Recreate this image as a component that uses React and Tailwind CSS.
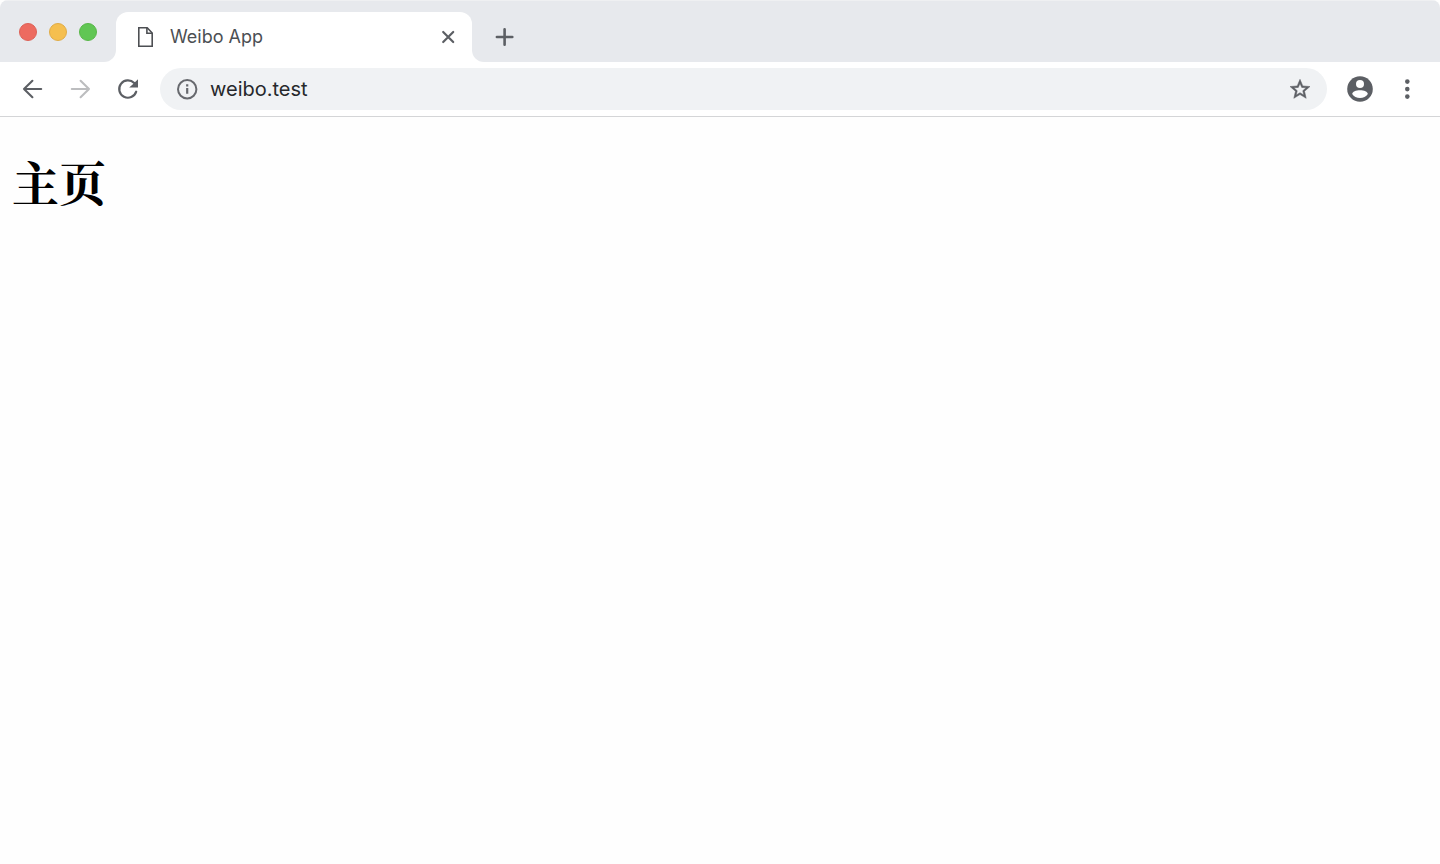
import React from "react";

function TrafficLights() {
  return (
    <div className="flex gap-3">
      <button aria-label="Close window" className="size-[18px] rounded-full border border-[#dd6157] bg-[#ed6b60]" />
      <button aria-label="Minimize window" className="size-[18px] rounded-full border border-[#e0ac46] bg-[#f5bf4f]" />
      <button aria-label="Zoom window" className="size-[18px] rounded-full border border-[#58b748] bg-[#61c654]" />
    </div>
  );
}

function TabStrip() {
  return (
    <div className="flex h-[62px] overflow-hidden rounded-t-lg bg-white">
      <div className="flex w-[116px] shrink-0 items-start rounded-br-xl border-t border-[#eff0f2] bg-[#e7e9ed] pt-[22px] pl-[19px]">
        <TrafficLights />
      </div>
      <div className="w-[356px] border-t border-[#eff0f2] bg-[#e7e9ed] pt-[11px]">
        <div className="flex h-[50px] items-center rounded-t-xl bg-white pr-4 pl-5">
          <svg width="18" height="24" viewBox="0 0 18 24" fill="none" stroke="#4d4f53" strokeWidth="1.6" aria-hidden="true">
            <path d="M2.8 2.8H11.2L16.2 8V21.2H2.8Z" />
            <path d="M10.9 3V8.3H16" />
          </svg>
          <span className="ml-4 flex-1 font-['Inter',sans-serif] text-lg text-[#4c4f53]">Weibo App</span>
          <button aria-label="Close tab">
            <svg width="16" height="16" viewBox="0 0 16 16" fill="none" stroke="#5c5f64" strokeWidth="2.2" strokeLinecap="round">
              <path d="M3.2 3L13.2 13M13.2 3L3.2 13" />
            </svg>
          </button>
        </div>
      </div>
      <div className="flex flex-1 items-start rounded-bl-xl border-t border-[#eff0f2] bg-[#e7e9ed] pt-[26px] pl-[22px]">
        <button aria-label="New tab">
          <svg width="20" height="20" viewBox="0 0 20 20" fill="none" stroke="#5c5f64" strokeWidth="2.6" strokeLinecap="round">
            <path d="M10.6 2.3V17.7M2.9 10H18.3" />
          </svg>
        </button>
      </div>
    </div>
  );
}

function Toolbar() {
  return (
    <div className="flex h-[55px] items-center border-b border-[#d4d5d7] bg-white pr-5 pl-5">
      <div className="flex gap-6">
        <button aria-label="Back">
          <svg width="24" height="24" viewBox="0 0 24 24" fill="none" stroke="#5c5f64" strokeWidth="2.1" strokeLinecap="round" strokeLinejoin="round">
            <path d="M21.2 12H4M12.4 3.8L4 12L12.4 20.2" />
          </svg>
        </button>
        <button aria-label="Forward" disabled>
          <svg width="24" height="24" viewBox="0 0 24 24" fill="none" stroke="#bcbdbf" strokeWidth="2.1" strokeLinecap="round" strokeLinejoin="round">
            <path d="M3.8 12H21M12.6 3.8L21 12L12.6 20.2" />
          </svg>
        </button>
        <button aria-label="Reload">
          <svg width="24" height="24" viewBox="0 0 24 24" fill="none">
            <path d="M18.2 6A8.7 8.7 0 1 0 20.2 14.7" stroke="#5c5f64" strokeWidth="2.2" strokeLinecap="round" />
            <path d="M22 2.2V10.6H13.2L16.6 7.4Z" fill="#5c5f64" />
          </svg>
        </button>
      </div>
      <div className="ml-5 flex h-[42px] flex-1 items-center rounded-full bg-[#f0f2f4] px-4">
        <button aria-label="View site information">
          <svg width="22" height="22" viewBox="0 0 22 22" fill="none">
            <circle cx="11.2" cy="11.2" r="9.2" stroke="#67696e" strokeWidth="2" />
            <path d="M11.2 10V15.8M11.2 6.2V8.4" stroke="#67696e" strokeWidth="2.2" />
          </svg>
        </button>
        <input
          aria-label="Address"
          defaultValue="weibo.test"
          className="ml-3 min-w-0 flex-1 bg-transparent font-['Inter',sans-serif] text-xl text-[#26282b] outline-none"
        />
        <button aria-label="Bookmark this page">
          <svg width="22" height="22" viewBox="1 0.7 22 22" fill="#5c5f64" stroke="#5c5f64" strokeWidth="0.5">
            <path d="M22 9.24l-7.19-.62L12 2 9.19 8.63 2 9.24l5.46 4.73L5.82 21 12 17.27 18.18 21l-1.63-7.03L22 9.24zM12 15.4l-3.76 2.27 1-4.28-3.32-2.88 4.38-.38L12 6.1l1.71 4.04 4.38.38-3.32 2.88 1 4.28L12 15.4z" />
          </svg>
        </button>
      </div>
      <button aria-label="Profile" className="ml-5">
        <svg width="26" height="26" viewBox="0 0 26 26">
          <circle cx="13" cy="13" r="12.8" fill="#5c5f64" />
          <circle cx="13" cy="8" r="4" fill="white" />
          <path d="M5.2 18C5.2 15.6 9 14.2 13 14.2S20.8 15.6 20.8 18C19.2 20.4 16.3 22 13 22S6.8 20.4 5.2 18Z" fill="white" />
        </svg>
      </button>
      <button aria-label="Menu" className="ml-[27px]">
        <svg width="20" height="24" viewBox="0 0 20 24" fill="#5c5f64">
          <circle cx="7.3" cy="4.6" r="2.3" />
          <circle cx="7.3" cy="12.1" r="2.3" />
          <circle cx="7.3" cy="19.6" r="2.3" />
        </svg>
      </button>
    </div>
  );
}

export default function App() {
  return (
    <div className="min-h-screen bg-[#fefefe]">
      <header>
        <TabStrip />
        <Toolbar />
      </header>
      <main className="px-3 pt-8">
        <h1 className="font-['Noto_Serif_CJK_SC','Noto_Sans_CJK_SC',serif] text-[47px] leading-[64px] font-bold text-black">主页</h1>
      </main>
    </div>
  );
}
